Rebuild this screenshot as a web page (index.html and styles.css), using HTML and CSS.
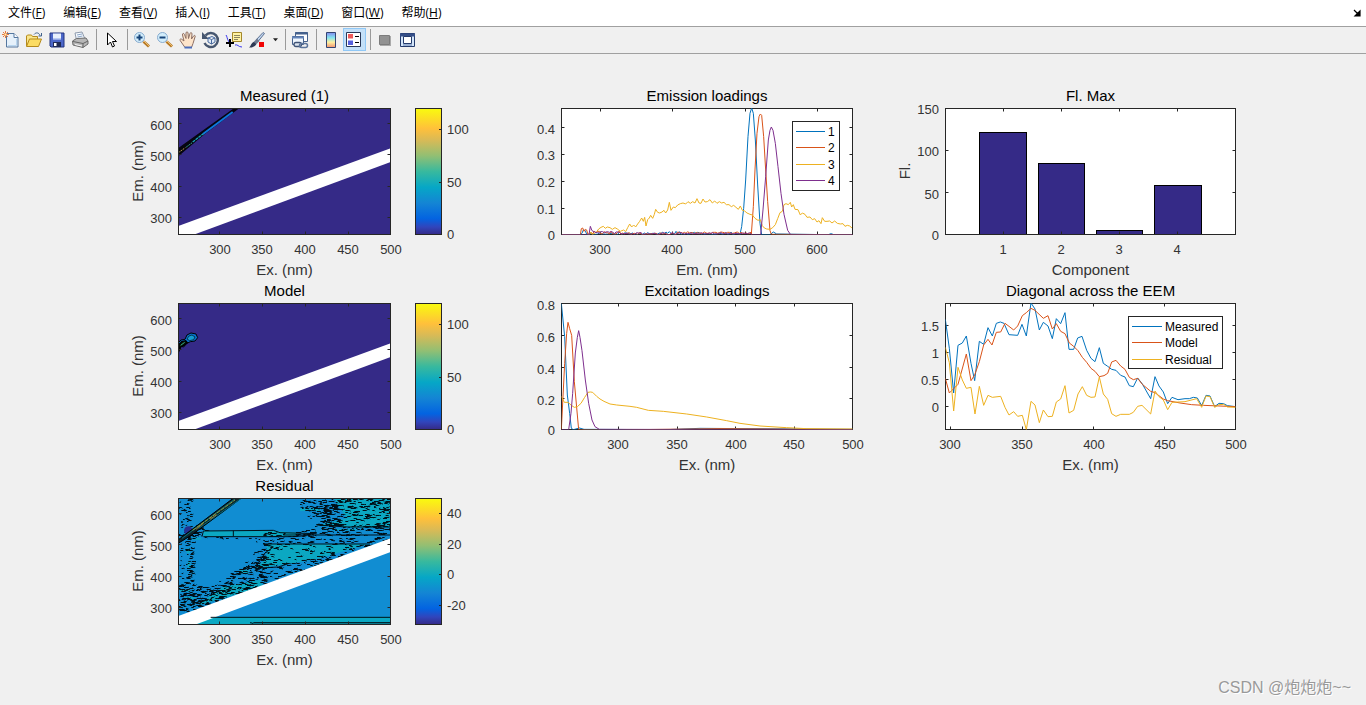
FILE: index.html
```html
<!DOCTYPE html>
<html lang="zh-CN">
<head>
<meta charset="utf-8">
<meta name="viewport" content="width=device-width, initial-scale=1">
<title>Figure 1</title>
<link rel="stylesheet" href="styles.css">
</head>
<body>
<header>
<nav class="menubar">
  <button>文件(<u>F</u>)</button>
  <button>编辑(<u>E</u>)</button>
  <button>查看(<u>V</u>)</button>
  <button>插入(<u>I</u>)</button>
  <button>工具(<u>T</u>)</button>
  <button>桌面(<u>D</u>)</button>
  <button>窗口(<u>W</u>)</button>
  <button>帮助(<u>H</u>)</button>
  <button class="dock" aria-label="Dock figure"><svg width="8" height="8" viewBox="0 0 8 8"><path d="M1 1l4 4M7 2v5H2z" stroke="#000" stroke-width="1.2"/></svg></button>
</nav>
<div class="toolbar" role="toolbar" aria-label="Figure tools">
  <button aria-label="New figure"><svg viewBox="0 0 18 18"><path d="M4.500 2.500h7.500l4 4v9.500H4.500z" fill="#e6f1fb" stroke="#54779f"/><path d="M12 2.500V6.500h4" fill="#fff" stroke="#54779f"/><path d="M6 14.500h8.500V8" fill="none" stroke="#b9d6ef"/><path d="M3.500 0v7M0 3.500h7M1 1l5 5M6 1L1 6" stroke="#e8793c"/><rect x="2.500" y="2.500" width="2" height="2" fill="#fff3b0"/></svg></button>
  <button aria-label="Open"><svg viewBox="0 0 18 18"><path d="M1.500 15V5l1-1h4l1 1.500h5V8" fill="#f9e58a" stroke="#b58a1b"/><path d="M1.500 15.500L4.500 8h12l-3 7.500z" fill="#fbdc63" stroke="#b58a1b"/><path d="M9 3.500c2-2.500 5-2 6 1M16.500 2v3h-3" fill="none" stroke="#40628a"/></svg></button>
  <button aria-label="Save"><svg viewBox="0 0 18 18"><path d="M2 2h14v14H3l-1-1z" fill="#4c67c9" stroke="#23347e"/><path d="M5 2.500h8v6H5z" fill="#e8f0fd"/><path d="M5 8h8" stroke="#8aa4e6"/><path d="M5 11h8v5H5z" fill="#202a55"/><path d="M6 12h2.500v3H6z" fill="#fff"/></svg></button>
  <button aria-label="Print"><svg viewBox="0 0 18 18"><path d="M5.500 9L4 2l7-1 3 7z" fill="#f7fbff" stroke="#8e9aac"/><path d="M6 4l5-1M6.500 6l5-1" stroke="#8ba5c8"/><path d="M1.500 10l4-2.500L15 7l2 3v3l-5 3.500-10-2.500z" fill="#b7b7b7" stroke="#6b6b6b"/><path d="M2 10.500l10 2 5-2.500M12 12.500v4" fill="none" stroke="#666"/><path d="M4 13.500l7 1.500" stroke="#f5f5f5"/></svg></button>
  <i></i>
  <button aria-label="Edit plot"><svg viewBox="0 0 18 18"><path d="M5.500 2v12l3-3 2 5 2-1-2-4.500h4z" fill="#fff" stroke="#000"/></svg></button>
  <i></i>
  <button aria-label="Zoom in"><svg viewBox="0 0 18 18"><path d="M10.500 10.500l5.500 5" stroke="#b87a24" stroke-width="3"/><path d="M11 10l5 5" stroke="#eac077"/><circle cx="6.500" cy="6.500" r="5" fill="#d2edfb" stroke="#88acd0"/><path d="M3.500 6.500h6M6.500 3.500v6" stroke="#17447a" stroke-width="2"/></svg></button>
  <button aria-label="Zoom out"><svg viewBox="0 0 18 18"><path d="M10.500 10.500l5.500 5" stroke="#b87a24" stroke-width="3"/><path d="M11 10l5 5" stroke="#eac077"/><circle cx="6.500" cy="6.500" r="5" fill="#d2edfb" stroke="#88acd0"/><path d="M3.500 6.500h6" stroke="#17447a" stroke-width="2"/></svg></button>
  <button aria-label="Pan"><svg viewBox="0 0 18 18"><path d="M6 16.500L1.500 10C0 8 2 7.500 3 8.500L5 10 3.500 4c-.3-2 1.500-2 2-.5L7 7.500V2c0-1.500 2-1.500 2 0l.5 5.500L11 2.500c.5-1.500 2-1 2 .5L12.500 8l2-3c1-1.300 2.300-.3 1.500 1L14 12.500l-1.500 4z" fill="#fde4ca" stroke="#8d6e63"/><path d="M5.500 15.500h7.500v2H5.500z" fill="#4a6cba"/></svg></button>
  <button aria-label="Rotate 3D"><svg viewBox="0 0 18 18"><path d="M3.500 4.500A7 7 0 1 1 2.500 12" fill="none" stroke="#46566f" stroke-width="2.400"/><path d="M0 1v7h7z" fill="#46566f"/><path d="M6 7l4-1.500 3 1.500v4L9.500 13 6 11zM6 7l3.500 1.500L13 7M9.500 8.500V13" fill="#e1ebf7" stroke="#496a9e"/></svg></button>
  <button aria-label="Data cursor"><svg viewBox="0 0 18 18"><path d="M7.500 1.500h9v9h-9z" fill="#fff2a3" stroke="#a3872b"/><path d="M9 4.500h6M9 6.500h6M9 8.500h4" stroke="#8b8460"/><path d="M1 4c1 1 1 4 3 7M10 14c3-1 3 2 7 2" fill="none" stroke="#3b38ee"/><path d="M5 8v8M1 12h8" stroke="#000" stroke-width="2"/></svg></button>
  <button aria-label="Brush data"><svg viewBox="0 0 18 18"><path d="M15 1.500l1.500 1L10 10.500 8 9z" fill="#c0d4ee" stroke="#5f7393"/><path d="M9 7.500l2.500 2.500-3 3-3-2z" fill="#6c7990"/><path d="M1 16.500c2-1 2-5 5-5.500l2.500 2C7 15.500 4 17 1 16.500z" fill="#2d3a55"/><path d="M11 11h5v5h-5z" fill="#f00505"/></svg></button>
  <button class="drop" aria-label="Brush options"><svg viewBox="0 0 6 4"><path d="M0 0h6L3 3.500z" fill="#222"/></svg></button>
  <i></i>
  <button aria-label="Link plot"><svg viewBox="0 0 18 18"><path d="M4.500 1.500h12v9h-12z" fill="#fff" stroke="#45618c"/><path d="M4 2.500h13" stroke="#45618c" stroke-width="2"/><path d="M1.500 5.500h11v8h-11z" fill="#eef5fd" stroke="#45618c"/><path d="M1 6.500h12" stroke="#6484b8" stroke-width="2"/><rect x="3" y="11.500" width="7.500" height="4" rx="2" fill="#dce5ef" stroke="#405477" stroke-width="1.300"/><rect x="8.500" y="12.500" width="8" height="4" rx="2" fill="none" stroke="#5c759c" stroke-width="1.500"/></svg></button>
  <i></i>
  <button aria-label="Insert colorbar"><svg viewBox="0 0 18 18"><path d="M4.500 1.500h9v15h-9z" fill="url(#rainbow)" stroke="#334572"/></svg></button>
  <button class="active" aria-label="Insert legend" aria-pressed="true"><svg viewBox="0 0 18 18"><path d="M1.500 1.500h14v14h-14z" fill="#fff" stroke="#293858"/><path d="M3 3h5v4.500H3z" fill="#ef5a5a"/><path d="M3 9.500h5V14H3z" fill="#5660dc"/><path d="M10 5.500h4M10 11.500h4" stroke="#000"/></svg></button>
  <i></i>
  <button aria-label="Hide plot tools"><svg viewBox="0 0 18 18"><path d="M4 5h11v10H4z" fill="#aaa"/><path d="M3.500 4.500h10v9h-10z" fill="#929292" stroke="#7c7c7c"/></svg></button>
  <button aria-label="Show plot tools"><svg viewBox="0 0 18 18"><path d="M1.500 2.500h14v13h-14z" fill="#d4e6fa" stroke="#243b6c"/><path d="M1 4h15" stroke="#354f88" stroke-width="3"/><path d="M4.500 5.500h8v7h-8z" fill="#fff" stroke="#243b6c"/><path d="M4 14h9" stroke="#5d79ad"/></svg></button>
</div>
</header>
<main class="figure" id="figure"></main>
<p class="watermark">CSDN @炮炮炮~~</p>
<svg class="defs" width="0" height="0" aria-hidden="true">
  <defs>
    <linearGradient id="rainbow" x1="0" y1="0" x2="0" y2="1"><stop offset="0" stop-color="#8289ee"/><stop offset=".35" stop-color="#83e5ee"/><stop offset=".65" stop-color="#fff0a0"/><stop offset="1" stop-color="#f09373"/></linearGradient>
    <linearGradient id="parula" x1="0" y1="1" x2="0" y2="0"><stop offset="0" stop-color="#352a87"/><stop offset=".06" stop-color="#3145bc"/><stop offset=".125" stop-color="#0363e1"/><stop offset=".25" stop-color="#1485d4"/><stop offset=".375" stop-color="#06a7c6"/><stop offset=".5" stop-color="#38b99e"/><stop offset=".625" stop-color="#92bf73"/><stop offset=".75" stop-color="#d9ba56"/><stop offset=".84" stop-color="#ffc03b"/><stop offset="1" stop-color="#f9fb0e"/></linearGradient>
  </defs>
</svg>
<script src="charts.js"></script>
</body>
</html>
```

FILE: styles.css
```css
* { box-sizing: border-box; }
body {
  margin: 0;
  min-height: 100vh;
  position: relative;
  background: #f0f0f0;
  color: #000;
  font-family: "Liberation Sans", "Noto Sans CJK SC", sans-serif;
}
button {
  border: 0;
  padding: 0;
  background: none;
  color: inherit;
  font: inherit;
}
.menubar {
  display: flex;
  align-items: center;
  gap: 18px;
  height: 26px;
  padding: 0 5px 0 8px;
  background: #fff;
  font: 12px/18px "Open Sans", "Noto Sans CJK SC", sans-serif;
}
.menubar u { text-underline-offset: 1px; }
.menubar button { white-space: nowrap; }
.menubar .dock { margin-left: auto; }
.dock svg { display: block; }
.toolbar {
  display: flex;
  align-items: center;
  height: 28px;
  border-top: 1px solid #a0a0a0;
  border-bottom: 1px solid #a0a0a0;
  padding-bottom: 1px;
}
.toolbar button {
  flex: none;
  width: 23px;
  height: 23px;
  padding: 2px;
}
.toolbar svg { display: block; width: 18px; height: 18px; }
.toolbar .drop { width: 12px; padding: 4px; }
.toolbar .drop svg { width: 5px; height: 4px; }
.toolbar .active { background: #c4e0f8; box-shadow: inset 0 0 0 1px #90c8f6; }
.toolbar i {
  flex: none;
  width: 8px;
  height: 21px;
  background: linear-gradient(#9a9a9a, #9a9a9a) center / 1px 100% no-repeat;
}
.figure {
  display: grid;
  grid-template-columns: repeat(3, minmax(0, 1fr));
  padding: 30px 94px 0 120px;
}
.chart { display: block; width: 100%; overflow: visible; }
.c1 { grid-column: 1; }
.c2 { grid-column: 2; }
.c3 { grid-column: 3; }
.chart text { fill: #333; font-size: 13px; }
.chart .title { fill: #000; font-size: 15px; text-anchor: middle; }
.chart .label { font-size: 15px; text-anchor: middle; }
.chart .xtick { text-anchor: middle; }
.chart .ytick { text-anchor: end; }
.chart .key { fill: #000; font-size: 12px; }
.axes { fill: none; stroke: #262626; }
.line { fill: none; stroke-width: 1; vector-effect: non-scaling-stroke; stroke-linejoin: round; }
.blue { stroke: #0072bd; }
.red { stroke: #d95319; }
.yellow { stroke: #edb120; }
.purple { stroke: #7e2f8e; }
.navy { fill: #352a87; }
.teal { fill: #0ba8c2; }
.sea { fill: #118dd2; }
.white { fill: #fff; }
.bar { fill: #352a87; stroke: #000; }
.ink { fill: none; stroke: #001018; }
.watermark {
  position: absolute;
  right: 15px;
  bottom: 5px;
  margin: 0;
  color: #999;
  font-size: 16px;
  line-height: 24px;
  text-shadow: 1px 1px 0 #fff;
}
.defs { position: absolute; }
```

FILE: charts.js
```js
// Every chart is drawn in a 384 x 195 cell; traces use a grid three times finer.
const TOP = 24.5, BOTTOM = 150.5;
const snap = v => Math.floor(v) + 0.5;

function fine(dx, dy, body) {
  return `<g transform="translate(${dx} ${dy}) scale(.33333)">${body}</g>`;
}
function trace(color, points) {
  return `<polyline class="line ${color}" points="${points}"/>`;
}
function legend(x, w, lineEnd, names) {
  const colors = ['blue', 'red', 'yellow', 'purple'];
  let s = `<rect x="${x}.5" y="37.5" width="${w}" height="${names.length > 3 ? 69 : 52}" fill="#fff" stroke="#262626"/>`;
  names.forEach((n, i) => {
    const y = 47.5 + Math.round(i * 16.4);
    s += `<path class="line ${colors[i]}" d="M${x + 4} ${y}H${lineEnd}"/><text class="key" x="${lineEnd + 3}" y="${y + 4.5}">${n}</text>`;
  });
  return s;
}
function chart(c) {
  const { left, right } = c, mid = (left + right) / 2;
  let ticks = '', labels = '';
  c.xt.forEach(([x, t]) => {
    ticks += `M${snap(x)} ${BOTTOM}v-3M${snap(x)} ${TOP}v3`;
    labels += `<text class="xtick" x="${Math.round(x)}" y="170">${t}</text>`;
  });
  c.yt.forEach(([y, t]) => {
    ticks += `M${left} ${snap(y)}h3M${right} ${snap(y)}h-3`;
    labels += `<text class="ytick" x="${left - 6.5}" y="${Math.round(y) + 6}">${t}</text>`;
  });
  let bar = '';
  if (c.cb) {
    bar = `<rect x="295.5" y="${TOP}" width="26" height="${BOTTOM - TOP}" fill="url(#parula)" stroke="#262626"/>`;
    c.cb.forEach(([y, t]) => {
      bar += `<path class="axes" d="M321 ${snap(y)}h-2"/><text x="327" y="${Math.round(y) + 5}">${t}</text>`;
    });
  }
  const w = right - left, h = BOTTOM - TOP;
  const frame = `<path class="axes" d="${ticks}"/><rect class="axes" x="${left}" y="${TOP}" width="${w}" height="${h}"/>`;
  return `<svg class="chart c${c.col}" viewBox="0 0 384 195" role="img" aria-label="${c.title}">
    <clipPath id="k${c.id}"><rect x="${left}" y="${TOP}" width="${w}" height="${h}"/></clipPath>
    <rect class="white" x="${left}" y="${TOP}" width="${w}" height="${h}"/>
    ${c.over ? frame : ''}
    <g clip-path="url(#k${c.id})">${c.body}</g>
    ${c.over ? '' : frame}
    ${c.extra || ''}${bar}${labels}
    <text class="title" x="${mid}" y="17">${c.title}</text>
    ${c.xl ? `<text class="label" x="${mid}" y="191">${c.xl}</text>` : ''}
    ${c.yl ? `<text class="label" transform="translate(${c.col === 1 ? 23 : 22} 87) rotate(-90)">${c.yl}</text>` : ''}
  </svg>`;
}

// Repeatable pseudo-random numbers for the noise contours.
let seed = 7;
const rnd = () => (seed = (seed * 16807) % 2147483647) / 2147483647;
function inside(p, x, y) {
  let hit = false;
  for (let i = 0, j = p.length - 1; i < p.length; j = i++) {
    const [xi, yi] = p[i], [xj, yj] = p[j];
    if ((yi > y) !== (yj > y) && x < (xj - xi) * (y - yi) / (yj - yi) + xi) hit = !hit;
  }
  return hit;
}
function scatter(poly, count, size) {
  const xs = poly.map(p => p[0]), ys = poly.map(p => p[1]);
  const x0 = Math.min(...xs), x1 = Math.max(...xs), y0 = Math.min(...ys), y1 = Math.max(...ys);
  let d = '';
  for (let n = 0; n < count;) {
    const x = x0 + rnd() * (x1 - x0), y = y0 + rnd() * (y1 - y0);
    if (!inside(poly, x, y)) continue;
    n++;
    const a = size * (0.3 + rnd()), b = rnd() * 6 - 3;
    const row = Math.round(y / 3) * 3 + 1.5;
    d += `M${x.toFixed(0)} ${row}h${a.toFixed(0)}l${(a / 3).toFixed(0)} ${b.toFixed(0)}`;
  }
  return d;
}
const ink = (d, w) => `<path class="ink" stroke-width="${w}" d="${d}"/>`;

const measured = fine(0, -4, `
  <rect class="navy" x="175" y="85" width="640" height="380"/>
  <path class="white" d="M175 438L812 205V246L225 463H175z"/>
  <path d="M176 203L344 83H360L250 166 176 228z" fill="#050510"/>
  <path d="M249 162L338 96" stroke="#0f76dc" stroke-width="6"/>
  <path d="M218 186L250 161" stroke="#16a1b8" stroke-width="4" stroke-dasharray="9 2"/>
  <path d="M178 216L196 203" stroke="#d9ba56" stroke-width="3" stroke-dasharray="4 3"/>
  <path d="M199 201L218 187" stroke="#38b99e" stroke-width="3" stroke-dasharray="5 3"/>`);
const model = fine(0, 1, `
  <rect class="navy" x="175" y="70" width="640" height="380"/>
  <path class="white" d="M175 423L812 190V231L225 448H175z"/>
  <path d="M175 188l8-8 12-2 6-13 12-6 15 3 5 11-8 10-14 2-12 6-8 10-8-2-4 9-8 2z" fill="#0872cf" stroke="#000" stroke-width="3"/>
  <path d="M176 194l9-9 12-3 5 6-10 8-10 5-4 9z" fill="#05100c" stroke="#000" stroke-width="4"/>
  <path d="M201 177l6-9 9-3 9 6-4 8-12 3z" fill="#149bd0" stroke="#001018" stroke-width="2"/>
  <path d="M182 196l12-9" stroke="#39b77e" stroke-width="3"/>`);

const noise = [
  scatter([[176, 68], [214, 68], [212, 190], [176, 190]], 65, 6),
  scatter([[192, 195], [218, 195], [214, 320], [196, 320]], 50, 8),
  scatter([[176, 200], [192, 190], [192, 330], [176, 330]], 14, 5),
  scatter([[176, 318], [235, 330], [270, 335], [270, 385], [176, 420]], 150, 9),
  scatter([[270, 335], [345, 285], [385, 255], [425, 265], [440, 322], [270, 385]], 190, 9),
  scatter([[340, 290], [400, 235], [430, 200], [450, 230], [430, 270]], 40, 9),
  scatter([[400, 265], [520, 262], [700, 210], [760, 205], [600, 268], [430, 320]], 80, 10),
  scatter([[440, 210], [740, 210], [600, 262], [430, 270]], 60, 9),
  scatter([[430, 188], [811, 184], [811, 192], [745, 207], [430, 207]], 55, 10),
  scatter([[430, 172], [811, 160], [811, 180], [430, 184]], 60, 11),
  scatter([[590, 148], [811, 145], [811, 166], [540, 170]], 60, 11),
  scatter([[540, 75], [640, 68], [660, 140], [600, 140], [545, 100]], 85, 10),
  scatter([[640, 68], [811, 68], [811, 158], [590, 152]], 170, 11),
  scatter([[520, 68], [560, 68], [640, 150], [580, 150]], 24, 6),
  scatter([[230, 184], [530, 188], [460, 205], [330, 198]], 18, 6),
  scatter([[176, 200], [230, 150], [260, 165], [190, 205]], 45, 7)
].join('');
const residual = fine(0, 1, `
  <rect class="sea" x="175" y="67" width="640" height="385"/>
  <path class="teal" d="M640 68H812V158H700L590 152 680 130zM440 207H745L600 250 500 268 405 280 440 250zM250 167l210 0 80 6-20 12H250zM240 385l70-50 110-20 10 20-190 55zM270 425H812V452H215z"/>
  <g class="teal">
    <rect x="180" y="345" width="30" height="5"/><rect x="200" y="220" width="10" height="14"/>
    <rect x="203" y="260" width="8" height="18"/><rect x="192" y="366" width="32" height="6"/>
    <rect x="216" y="188" width="28" height="6"/><rect x="540" y="100" width="60" height="8"/>
    <rect x="640" y="162" width="70" height="4"/><rect x="360" y="285" width="26" height="10"/>
  </g>
  ${ink('M250 168L460 166 480 173 590 176M250 185H520l40-3M250 168l-4 17M340 167v17', 3)}
  ${ink('M430 207H750M440 208l20 8-25 18-30 46 70-4 30-10M590 150L680 156H812M490 180H811', 3)}
  ${ink(noise, 3)}
  <circle cx="205" cy="167" r="13" fill="#26308f"/>
  <path d="M170 198L350 62H374L215 180 170 208z" fill="#0d2730" stroke="#000" stroke-width="3"/>
  <path d="M236 160L372 64M186 190L350 68" stroke="#08949f" stroke-width="2"/>
  <path d="M218 166L345 75" stroke="#92a43e" stroke-width="3" stroke-dasharray="12 3"/>
  <path d="M228 163L250 145M270 133l20-14" stroke="#eda23c" stroke-width="2"/>
  <path class="white" d="M175 423L812 190V231L225 449H175z"/>
  ${ink('M272 427H812M400 443H812M390 443q10 0 10 5h412', 3)}`);

const eem = { col: 1, left: 58.5, right: 270.5, xl: 'Ex. (nm)', yl: 'Em. (nm)',
  xt: [[99.7, 300], [142.3, 350], [185.4, 400], [228.3, 450], [270.5, 500]],
  yt: [[39.6, 600], [70.7, 500], [102, 400], [133.3, 300]] };
const scale = [[45.3, 100], [98, 50], [150.4, 0]];

let low1 = '125,464 181,464 186,460 190,450 196,452 200,463', low2 = '125,464 181,464 184,446 188,444 192,454 196,448 200,450 204,464', low4 = '125,464 207,464 211,439 216,452 222,455';
for (let x = 208; x < 694; x += 5) {
  if (x < 660) low1 += ` ${x},${(463 - rnd() * rnd() * 10).toFixed(0)}`;
  low2 += ` ${x},${(x < 300 ? 463 - rnd() * 11 : x < 470 ? 464 - rnd() * rnd() * 10 : 461 - rnd() * 6).toFixed(0)}`;
  if (x > 224) low4 += ` ${x},${(x < 300 ? 461 - rnd() * 8 : x < 470 ? 464 - rnd() * rnd() * 9 : 463 - rnd() * 5).toFixed(0)}`;
}
const yellow = '208,464 212,456 216,463 223,461 230,455 236,447 243,442 250,439 256,445 262,441 270,443 277,448 285,443 292,447 301,454 311,450 317,455 323,443 329,432 335,441 341,435 347,441 353,432 359,424 365,414 370,424 374,412 378,438 383,419 388,414 392,406 398,415 403,403 407,388 413,397 419,399 426,396 432,391 437,399 443,390 448,367 453,391 460,381 466,383 473,375 481,371 489,369 497,372 504,365 511,370 518,365 525,369 531,356 537,369 543,370 549,357 555,366 562,365 570,359 577,369 584,363 591,370 598,365 605,369 612,367 619,374 627,374 634,380 641,376 648,382 655,388 661,378 667,391 674,393 681,399 690,403 697,405 705,415 714,421 721,419 727,437 733,444 740,447 750,448 758,443 766,434 773,416 780,398 787,394 792,374 798,371 805,374 811,367 815,381 820,374 825,388 834,389 841,405 847,399 855,403 861,412 870,411 877,419 884,416 891,426 897,422 903,431 907,413 914,424 921,424 929,423 936,429 944,423 952,430 961,432 969,431 975,439 982,436 989,438 996,444';
const emission = fine(16, -4,
  trace('blue', low1 + ' 660,463 665,440 671,385 677,300 684,170 690,100 695,84 700,100 706,180 713,315 720,430 725,464 750,464 760,456 770,462 925,464 933,461 942,464 998,464') +
  trace('red', low2 + ' 694,463 700,380 705,270 711,160 717,110 721,102 725,106 731,170 737,270 743,365 750,452 754,463 998,464') +
  trace('yellow', yellow) +
  trace('purple', low4 + ' 696,464 722,464 729,390 737,290 745,180 750,151 754,141 759,151 766,190 774,260 783,340 792,403 803,451 812,464 998,464'));
const excitation = fine(16, 1,
  trace('blue', '124,70 134,170 142,345 149,400 154,445 160,449 178,444 192,448 440,449 540,445 998,448') +
  trace('red', '124,449 134,250 140,160 144,127 149,146 155,166 163,305 176,449 270,450 600,446 998,449') +
  trace('yellow', '124,349 133,367 144,367 154,376 163,382 172,380 183,370 194,352 204,337 211,336 218,337 230,349 240,357 252,364 270,372 290,375 330,379 350,382 385,391 430,394 500,402 560,411 620,422 660,430 720,438 800,443 860,446 998,447') +
  trace('purple', '124,449 146,449 153,400 158,340 166,219 172,172 176,152 180,172 186,212 196,300 206,370 216,420 225,440 238,448 998,449'));
const bars = [[268, 157, 142], [445, 250, 139], [619, 451, 139], [793, 316, 142]].map(([x, y, w]) => {
  const a = snap(x / 3 + 2), b = snap(y / 3 - 4);
  return `<rect class="bar" x="${a}" y="${b}" width="${Math.round(w / 3)}" height="${BOTTOM - b}"/>`;
}).join('');
const diagonal = fine(2, 1,
  trace('blue', '166,118 178,205 191,339 204,196 217,189 229,168 243,250 254,302 268,184 281,193 294,143 307,168 319,130 331,126 342,130 357,164 383,166 396,133 409,168 423,69 435,87 448,150 460,127 474,138 487,176 499,116 512,131 525,98 537,208 551,208 563,174 576,169 590,211 603,235 615,245 628,203 640,250 653,259 665,268 678,271 692,286 705,291 718,317 730,320 743,294 757,312 782,356 795,290 807,318 820,336 833,371 846,352 864,359 885,356 898,356 910,352 922,354 935,377 948,346 960,348 974,380 987,370 1001,371 1012,377 1037,380') +
  trace('red', '166,295 178,339 204,313 229,222 243,302 254,285 268,245 281,195 294,178 306,195 319,157 332,156 345,130 357,139 371,150 383,138 397,107 409,98 423,85 435,91 460,115 474,107 487,147 499,131 512,154 525,161 538,189 551,199 564,212 577,232 590,247 603,265 615,274 628,290 642,287 653,280 665,246 678,241 692,258 705,268 718,292 730,299 743,295 757,313 782,334 795,338 820,357 833,362 870,369 905,374 940,376 1037,380') +
  trace('yellow', '166,202 178,248 191,393 204,262 217,300 229,325 243,322 255,402 268,319 281,376 294,346 307,352 332,349 345,382 357,405 371,395 383,409 397,406 409,449 423,364 435,375 448,428 460,390 474,410 487,409 499,366 512,357 525,317 537,399 551,391 564,342 577,320 590,346 603,352 615,351 628,291 640,342 653,358 665,401 678,409 692,403 718,403 730,397 743,379 756,376 782,402 795,333 807,350 820,360 833,389 846,367 885,365 920,356 935,382 948,348 960,350 974,382 987,374 1001,373 1012,381 1037,382'));

document.getElementById('figure').innerHTML = [
  { ...eem, id: 1, title: 'Measured (1)', body: measured, cb: scale },
  { id: 2, col: 2, left: 57.5, right: 348.5, title: 'Emission loadings', xl: 'Em. (nm)', body: emission, over: true,
    xt: [[96.4, 300], [168.4, 400], [241.3, 500], [313.3, 600]],
    yt: [[43.7, 0.4], [70.4, 0.3], [97, 0.2], [124, 0.1], [150.4, 0]],
    extra: legend(288, 47, 321, [1, 2, 3, 4]) },
  { id: 3, col: 3, left: 57.5, right: 347.5, title: 'Fl. Max', xl: 'Component', yl: 'Fl.', body: bars,
    xt: [[115.4, 1], [173.3, 2], [231.4, 3], [289.4, 4]],
    yt: [[24.4, 150], [66.4, 100], [108.7, 50], [150.4, 0]] },
  { ...eem, id: 4, title: 'Model', body: model, cb: scale },
  { id: 5, col: 2, left: 57.5, right: 348.5, title: 'Excitation loadings', xl: 'Ex. (nm)', body: excitation, over: true,
    xt: [[114.4, 300], [173, 350], [231.6, 400], [290, 450], [348.5, 500]],
    yt: [[24.6, 0.8], [56.6, 0.6], [88.6, 0.4], [119.6, 0.2], [150.4, 0]] },
  { id: 6, col: 3, left: 57.5, right: 347.5, title: 'Diagonal across the EEM', xl: 'Ex. (nm)', body: diagonal, over: true,
    xt: [[62.4, 300], [134.4, 350], [205.6, 400], [276.6, 450], [347.5, 500]],
    yt: [[46.4, 1.5], [73.4, 1], [100.4, 0.5], [127.4, 0]],
    extra: legend(240, 94, 274, ['Measured', 'Model', 'Residual']) },
  { ...eem, id: 7, title: 'Residual', body: residual,
    cb: [[39.4, 40], [70, 20], [100.4, 0], [131.4, -20]] }
].map(chart).join('');
```
